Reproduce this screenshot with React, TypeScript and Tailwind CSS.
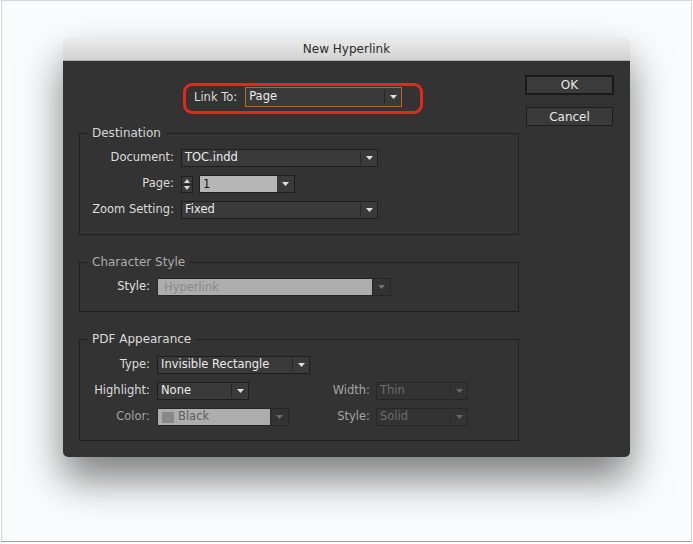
import React from "react";

const Arrow = ({ color = "#e0e0e0" }: { color?: string }) => (
  <svg width="7" height="4" viewBox="0 0 7 4">
    <path d="M0 0H7L3.5 4Z" fill={color} />
  </svg>
);

type DDProps = {
  w: string;
  text: string;
  kind?: "normal" | "focus" | "dark";
};

const Dropdown = ({ w, text, kind = "normal" }: DDProps) => {
  if (kind === "dark") {
    return (
      <div className={`${w} h-[18px] flex items-center border border-[#272727] bg-[#333333]`}>
        <span className="flex-1 pl-[3px] text-[#6c6c6c] leading-none">{text}</span>
        <div className="h-[12px] w-px bg-[#2a2a2a]" />
        <div className="w-[16px] flex items-center justify-center">
          <Arrow color="#666666" />
        </div>
      </div>
    );
  }
  const focus = kind === "focus";
  return (
    <div
      className={`${w} ${focus ? "h-[20px] border-[#b8692a]" : "h-[18px] border-[#1f1f1f]"} flex items-center border bg-[#3a3a3a]`}
    >
      <span className="flex-1 pl-[3px] text-[#ececec] leading-none">{text}</span>
      <div className="h-[14px] w-px bg-[#262626]" />
      <div className="w-[16px] flex items-center justify-center">
        <Arrow />
      </div>
    </div>
  );
};

const Group = ({
  title,
  titleColor,
  h,
  mt,
  pt,
  children,
}: {
  title: string;
  titleColor: string;
  h: string;
  mt: string;
  pt: string;
  children: React.ReactNode;
}) => (
  <div className={`relative w-[440px] ${h} ${mt} ${pt} border border-[#1f1f1f]`}>
    <div className={`absolute left-[7px] -top-[8px] px-[5px] bg-[#333333] leading-[14px] text-[12px] ${titleColor}`}>
      {title}
    </div>
    {children}
  </div>
);

export default function App() {
  return (
    <div className="w-[693px] h-[544px] bg-white font-['DejaVu_Sans','Liberation_Sans',sans-serif] text-[11.5px]">
      <div className="ml-[1px] w-[691px] h-[542px] border border-[#d4d4d4] border-b-[#9c9c9c] bg-[#fafbfc] overflow-hidden">
        <div className="ml-[61px] mt-[37px] w-[567px] h-[419px] rounded-[5px] shadow-[0_22px_40px_rgba(0,0,0,0.5)]">
          {/* title bar */}
          <div className="h-[23px] rounded-t-[5px] bg-gradient-to-b from-[#ebebeb] to-[#d3d3d3] border-b border-[#b0b0b0] flex items-center justify-center text-[12px] text-[#2b2b2b]">
            New Hyperlink
          </div>
          {/* body */}
          <div className="h-[396px] rounded-b-[5px] bg-[#333333] flex">
            <div className="w-[456px] pl-[16px]">
              {/* Link To */}
              <div className="mt-[22px] ml-[104px] w-[240px] h-[31px] border-[3px] border-[#e8261c] rounded-[9px] flex items-start pt-[1px] pl-[8px]">
                <span className="text-[#dcdcdc] leading-[20px] mr-[8px]">Link To:</span>
                <Dropdown w="w-[157px]" text="Page" kind="focus" />
              </div>

              {/* Destination */}
              <Group title="Destination" titleColor="text-[#d6d6d6]" h="h-[102px]" mt="mt-[19px]" pt="pt-[15px]">
                <div className="flex flex-col gap-[8px]">
                  <div className="flex items-center">
                    <span className="w-[94px] text-right text-[#dcdcdc]">Document:</span>
                    <div className="ml-[7px]">
                      <Dropdown w="w-[197px]" text="TOC.indd" />
                    </div>
                  </div>
                  <div className="flex items-center">
                    <span className="w-[94px] text-right text-[#dcdcdc]">Page:</span>
                    <div className="ml-[7px] flex items-center">
                      <div className="w-[12px] h-[17px] border border-[#1f1f1f] bg-[#3a3a3a] flex flex-col items-center justify-between py-[2px]">
                        <svg width="6" height="4" viewBox="0 0 6 4">
                          <path d="M0 4H6L3 0Z" fill="#d8d8d8" />
                        </svg>
                        <div className="w-full h-px bg-[#222]" />
                        <svg width="6" height="4" viewBox="0 0 6 4">
                          <path d="M0 0H6L3 4Z" fill="#d8d8d8" />
                        </svg>
                      </div>
                      <div className="ml-[6px] h-[18px] flex border border-[#1f1f1f]">
                        <div className="w-[77px] bg-[#b6b6b6] text-[#161616] pl-[3px] leading-[16px]">1</div>
                        <div className="w-[17px] bg-[#3a3a3a] flex items-center justify-center">
                          <Arrow />
                        </div>
                      </div>
                    </div>
                  </div>
                  <div className="flex items-center">
                    <span className="w-[94px] text-right text-[#dcdcdc]">Zoom Setting:</span>
                    <div className="ml-[7px]">
                      <Dropdown w="w-[197px]" text="Fixed" />
                    </div>
                  </div>
                </div>
              </Group>

              {/* Character Style */}
              <Group title="Character Style" titleColor="text-[#ababab]" h="h-[50px]" mt="mt-[27px]" pt="pt-[15px]">
                <div className="flex items-center">
                  <span className="w-[70px] text-right text-[#e2e2e2]">Style:</span>
                  <div className="ml-[7px] h-[18px] flex">
                    <div className="w-[216px] bg-[#adadad] border border-[#262626] text-[#8a8a8a] pl-[6px] leading-[16px]">
                      Hyperlink
                    </div>
                    <div className="w-[18px] bg-[#333333] border border-l-0 border-[#262626] flex items-center justify-center">
                      <Arrow color="#6e6e6e" />
                    </div>
                  </div>
                </div>
              </Group>

              {/* PDF Appearance */}
              <Group title="PDF Appearance" titleColor="text-[#dadada]" h="h-[102px]" mt="mt-[27px]" pt="pt-[16px]">
                <div className="flex flex-col gap-[8px]">
                  <div className="flex items-center">
                    <span className="w-[70px] text-right text-[#dcdcdc]">Type:</span>
                    <div className="ml-[7px]">
                      <Dropdown w="w-[153px]" text="Invisible Rectangle" />
                    </div>
                  </div>
                  <div className="flex items-center">
                    <span className="w-[70px] text-right text-[#dcdcdc]">Highlight:</span>
                    <div className="ml-[7px] w-[132px]">
                      <Dropdown w="w-[92px]" text="None" />
                    </div>
                    <span className="w-[81px] text-right text-[#a4a4a4]">Width:</span>
                    <div className="ml-[6px]">
                      <Dropdown w="w-[92px]" text="Thin" kind="dark" />
                    </div>
                  </div>
                  <div className="flex items-center">
                    <span className="w-[70px] text-right text-[#a4a4a4]">Color:</span>
                    <div className="ml-[7px] w-[132px] h-[18px] flex">
                      <div className="w-[114px] bg-[#adadad] border border-[#262626] flex items-center pl-[4px]">
                        <div className="w-[12px] h-[11px] bg-[#888888] mr-[4px]" />
                        <span className="text-[#5e5e5e] leading-none">Black</span>
                      </div>
                      <div className="w-[18px] bg-[#333333] border border-l-0 border-[#262626] flex items-center justify-center">
                        <Arrow color="#6e6e6e" />
                      </div>
                    </div>
                    <span className="w-[81px] text-right text-[#a4a4a4]">Style:</span>
                    <div className="ml-[6px]">
                      <Dropdown w="w-[92px]" text="Solid" kind="dark" />
                    </div>
                  </div>
                </div>
              </Group>
            </div>

            {/* Buttons */}
            <div className="pl-[6px] pt-[14px] w-[95px] flex flex-col items-center">
              <div className="w-[89px] h-[20px] border-2 border-[#1a1a1a] bg-[#3b3b3b] flex items-center justify-center text-[#e8e8e8] text-[12px]">
                OK
              </div>
              <div className="mt-[12px] w-[87px] h-[19px] border border-[#1e1e1e] bg-[#3a3a3a] flex items-center justify-center text-[#e8e8e8] text-[12px]">
                Cancel
              </div>
            </div>
          </div>
        </div>
      </div>
    </div>
  );
}
